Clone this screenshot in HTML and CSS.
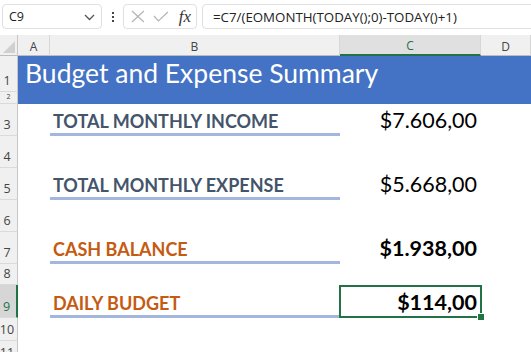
FILE: index.html
```html
<!DOCTYPE html>
<html lang="en">
<head>
  <meta charset="UTF-8" />
  <title>Budget and Expense Summary</title>
  <link rel="stylesheet" href="styles.css">
</head>
<body>
  <div class="formula-bar">
    <div class="name-box">
      <span>C9</span>
      <svg class="chevron" width="11" height="7" viewBox="0 0 11 7"><polyline points="1,1 5.5,5.5 10,1" fill="none" stroke="#555" stroke-width="1.3"/></svg>
    </div>
    <div class="dots"><i></i><i></i><i></i></div>
    <div class="fx-box">
      <svg width="14" height="13" viewBox="0 0 14 13"><path d="M1 1 L13 12 M13 1 L1 12" stroke="#b4b4b4" stroke-width="1.2"/></svg>
      <svg width="16" height="11" viewBox="0 0 16 11"><polyline points="1,5 5.5,10 15,1" fill="none" stroke="#b4b4b4" stroke-width="1.2"/></svg>
      <span class="fx">fx</span>
    </div>
    <div class="formula">=C7/(EOMONTH(TODAY();0)-TODAY()+1)</div>
  </div>

  <div class="sheet">
    <div class="corner"><svg width="12" height="12" viewBox="0 0 12 12"><polygon points="12,0 12,12 0,12" fill="#d0d0d0"/></svg></div>
    <div class="col-head">A</div>
    <div class="col-head">B</div>
    <div class="col-head active">C</div>
    <div class="col-head">D</div>

    <div class="row-head">1</div>
    <div class="title">Budget and Expense Summary</div>
    <div class="row-head short"><span>2</span></div>

    <div class="row-head">3</div>
    <div class="cell"></div>
    <div class="cell label">TOTAL MONTHLY INCOME</div>
    <div class="cell value">$7.606,00</div>
    <div class="cell"></div>

    <div class="row-head">4</div>
    <div class="blank"></div>

    <div class="row-head">5</div>
    <div class="cell"></div>
    <div class="cell label">TOTAL MONTHLY EXPENSE</div>
    <div class="cell value">$5.668,00</div>
    <div class="cell"></div>

    <div class="row-head">6</div>
    <div class="blank"></div>

    <div class="row-head">7</div>
    <div class="cell"></div>
    <div class="cell label accent">CASH BALANCE</div>
    <div class="cell value strong">$1.938,00</div>
    <div class="cell"></div>

    <div class="row-head">8</div>
    <div class="blank"></div>

    <div class="row-head active">9</div>
    <div class="cell"></div>
    <div class="cell label accent">DAILY BUDGET</div>
    <div class="cell value strong selected">$114,00</div>
    <div class="cell"></div>

    <div class="row-head">10</div>
    <div class="blank"></div>

    <div class="row-head">11</div>
    <div class="blank"></div>
  </div>
</body>
</html>
```

FILE: styles.css
```css
* {
  box-sizing: border-box;
}

body {
  margin: 0;
  background: #fff;
  font-family: 'Open Sans', 'Noto Sans', sans-serif;
  color: #222;
  overflow: hidden;
}

/* formula bar */

.formula-bar {
  height: 35px;
  display: flex;
  align-items: flex-start;
  padding: 4px 0 0 2px;
}

.name-box,
.fx-box,
.formula {
  height: 25px;
  border: 1px solid #e0e0e0;
  border-radius: 4px;
  background: #fff;
  display: flex;
  align-items: center;
}

.name-box {
  width: 100px;
  padding: 0 6px 0 6px;
  justify-content: space-between;
  font-size: 12.5px;
}

.chevron {
  margin-top: 1px;
}

.dots {
  width: 21px;
  display: flex;
  flex-direction: column;
  align-items: center;
  gap: 2px;
  padding-top: 8px;
}

.dots i {
  width: 2px;
  height: 2px;
  background: #444;
}

.fx-box {
  width: 74px;
  padding: 0 5px 0 7px;
  gap: 8px;
}

.fx {
  font-family: 'Liberation Serif', serif;
  font-style: italic;
  font-size: 17px;
  color: #333;
  margin-left: 2px;
}

.formula {
  flex: 1;
  margin-left: 5px;
  margin-right: -10px;
  padding-left: 10px;
  font-size: 13.3px;
}

/* grid */

.sheet {
  display: grid;
  grid-template-columns: 18px 32px 290px 141px 50px;
  grid-template-rows: 21px 36px 12px 32px 32px 32px 32px 32px 21px 33px 23px 23px;
}

.corner {
  background: #f0f0f0;
  border-right: 1px solid #c6c6c6;
  border-bottom: 1px solid #bdbdbd;
  display: flex;
  align-items: flex-end;
  justify-content: flex-end;
  padding: 0 2px 2px 0;
}

.col-head {
  background: #f0f0f0;
  border-bottom: 1px solid #bdbdbd;
  border-right: 1px solid #d6d6d6;
  font-size: 12px;
  color: #444;
  display: flex;
  align-items: center;
  justify-content: center;
  padding-top: 2px;
}

.col-head.active {
  background: #e0e0e0;
  color: #217346;
  border-bottom: 2px solid #217346;
}

.row-head {
  background: #f0f0f0;
  border-right: 1px solid #c6c6c6;
  border-bottom: 1px solid #dadada;
  font-size: 12.5px;
  color: #444;
  display: flex;
  align-items: flex-end;
  justify-content: center;
  padding: 0 3px 2px 0;
  overflow: hidden;
}

.row-head.short {
  align-items: flex-start;
  padding: 0;
  font-size: 7px;
  line-height: 9px;
}

.row-head.active {
  background: #d6d6d6;
  color: #217346;
  border-right: 2px solid #217346;
}

.title {
  grid-column: 2 / -1;
  grid-row: span 2;
  background: #4472c4;
  color: #fff;
  font-family: Lato, sans-serif;
  font-size: 26.5px;
  padding: 1px 0 0 7px;
  white-space: nowrap;
}

.blank {
  grid-column: 2 / -1;
}

.cell {
  display: flex;
  align-items: flex-end;
  white-space: nowrap;
  font-family: Lato, sans-serif;
}

.label {
  font-size: 18px;
  font-weight: bold;
  color: #44546a;
  padding: 0 0 1px 3px;
  border-bottom: 3px solid #a3b6df;
}

.label.accent {
  color: #c55a11;
}

.value {
  font-size: 21.5px;
  color: #000;
  justify-content: flex-end;
  padding: 0 4px 3px 0;
}

.value.strong {
  font-weight: bold;
}

.selected {
  position: relative;
}

.selected::after {
  content: '';
  position: absolute;
  left: -1px;
  top: 0;
  right: -1px;
  bottom: 0;
  border: 2px solid #217346;
}

.selected::before {
  content: '';
  position: absolute;
  right: -3px;
  bottom: -2px;
  width: 6px;
  height: 6px;
  background: #217346;
  border-left: 1px solid #fff;
  border-top: 1px solid #fff;
  z-index: 1;
}
```
